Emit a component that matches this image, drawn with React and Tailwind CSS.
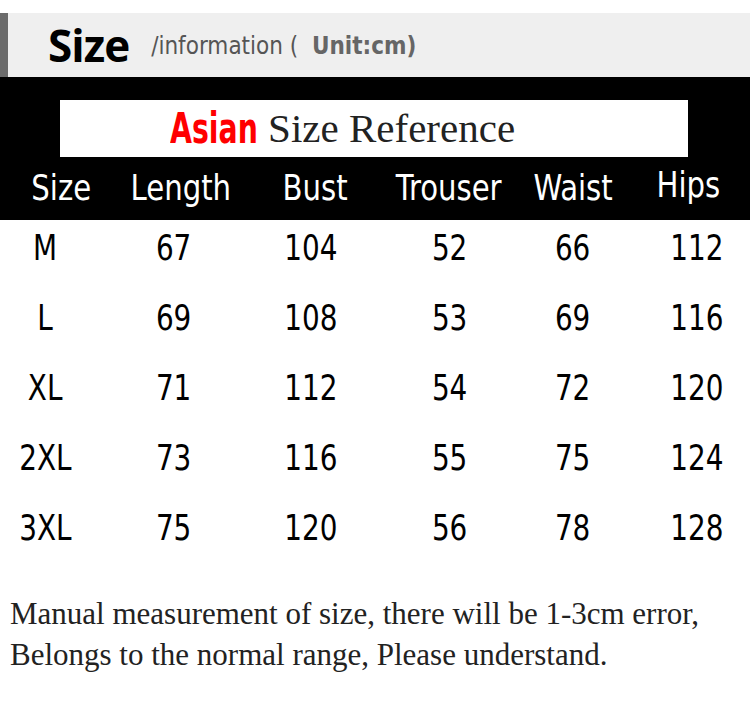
const rows = [
  ['M', '67', '104', '52', '66', '112'],
  ['L', '69', '108', '53', '69', '116'],
  ['XL', '71', '112', '54', '72', '120'],
  ['2XL', '73', '116', '55', '75', '124'],
  ['3XL', '75', '120', '56', '78', '128'],
];

const heads = ['Size', 'Length', 'Bust', 'Trouser', 'Waist', 'Hips'];

const narrow = { fontFamily: '"DejaVu Sans Condensed", "DejaVu Sans", sans-serif' };
const serif = { fontFamily: '"Liberation Serif", serif' };

export default function App() {
  return (
    <div className="w-[750px] h-[707px] bg-white overflow-hidden">
      <div className="h-[13px]" />
      {/* title band */}
      <div className="h-[64px] bg-[#efefef] flex items-center">
        <div className="w-[8px] h-full bg-[#6b6b6b]" />
        <span className="ml-[40px] text-[44px] font-bold text-black tracking-[-1px]" style={{ fontFamily: '"Open Sans", sans-serif' }}>Size</span>
        <span className="ml-[22px] mt-[2px] text-[24px] text-[#555]" style={narrow}>/information (&nbsp; <span className="font-bold text-[#666]">Unit:cm)</span></span>
      </div>

      {/* black header */}
      <div className="bg-black h-[143px] pt-[23px]">
        <div className="ml-[60px] w-[628px] h-[57px] bg-white flex items-center pl-[110px]">
          <span className="inline-block origin-left scale-x-[0.75] mr-[-19px] text-[42px] font-bold text-[#ff0000]" style={narrow}>Asian</span>
          <span className="text-[41px] text-[#222]" style={serif}>Size Reference</span>
        </div>
        <div className="grid grid-cols-[122px_118px_150px_108px_150px_80px] mt-[6px] text-white text-[36px] leading-[50px]" style={narrow}>
          {heads.map((h) => (
            <div key={h} className={h === 'Hips' ? 'text-center -mt-[3px]' : 'text-center'}>
              <span className="inline-block scale-x-[0.9]">{h}</span>
            </div>
          ))}
        </div>
      </div>

      {/* rows */}
      <div className="-mt-[7px]">
        {rows.map((r) => (
          <div key={r[0]} className="grid grid-cols-[90px_168px_106px_172px_74px_174px] h-[70px] items-center text-[36px] text-black" style={narrow}>
            {r.map((c, i) => (
              <div key={i} className="text-center">
                <span className="inline-block scale-x-[0.86]">{c}</span>
              </div>
            ))}
          </div>
        ))}
      </div>

      <div className="mt-[30px] pl-[10px] text-[31px] leading-[41px] text-[#222]" style={serif}>
        <p>Manual measurement of size, there will be 1-3cm error,</p>
        <p>Belongs to the normal range, Please understand.</p>
      </div>
    </div>
  );
}
